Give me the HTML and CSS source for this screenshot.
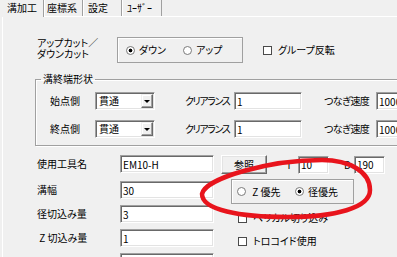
FILE: index.html
```html
<!DOCTYPE html>
<html lang="ja">
<head>
<meta charset="utf-8">
<title>溝加工</title>
<link rel="stylesheet" href="styles.css">
</head>
<body>

<div class="Tabs">
    <div class="Tab Active T1">溝加工</div>
    <div class="Tab T2">座標系</div>
    <div class="Tab T3">設定</div>
    <div class="Tab T4">ﾕｰｻﾞｰ</div>
</div>

<div class="Panel">

    <div class="CutRow">
        <div class="CutLabel">
            <div>アップカット／</div>
            <div>ダウンカット</div>
        </div>
        <div class="RadioBox CutBox">
            <span class="Radio CutFirst"><i class="Dot On"></i>ダウン</span>
            <span class="Radio"><i class="Dot"></i>アップ</span>
        </div>
        <span class="Check FlipCheck"><i class="Box"></i>グループ反転</span>
    </div>

    <fieldset class="Group">
        <legend>溝終端形状</legend>
        <div class="EndRow">
            <span class="EndLabel">始点側</span>
            <div class="Combo"><span class="ComboText">貫通</span><span class="ComboBtn"><i class="Arrow"></i></span></div>
            <span class="ClrLabel">クリアランス</span>
            <input class="Edit ClrEdit" value="1">
            <span class="SpdLabel">つなぎ速度</span>
            <input class="Edit SpdEdit" value="1000">
        </div>
        <div class="EndRow Second">
            <span class="EndLabel">終点側</span>
            <div class="Combo"><span class="ComboText">貫通</span><span class="ComboBtn"><i class="Arrow"></i></span></div>
            <span class="ClrLabel">クリアランス</span>
            <input class="Edit ClrEdit" value="1">
            <span class="SpdLabel">つなぎ速度</span>
            <input class="Edit SpdEdit" value="1000">
        </div>
    </fieldset>

    <div class="Lower">
        <div class="LeftCol">
            <div class="FieldRow"><span class="FieldLabel">使用工具名</span><input class="Edit LongEdit" value="EM10-H"></div>
            <div class="FieldRow"><span class="FieldLabel">溝幅</span><input class="Edit LongEdit" value="30"></div>
            <div class="FieldRow"><span class="FieldLabel">径切込み量</span><input class="Edit LongEdit" value="3"></div>
            <div class="FieldRow"><span class="FieldLabel">&nbsp;Z 切込み量</span><input class="Edit LongEdit" value="1"></div>
            <div class="FieldRow"><span class="FieldLabel">主軸回転数 S</span><input class="Edit LongEdit" value=""></div>
        </div>
        <div class="RightCol">
            <div class="ToolRow">
                <button class="Btn">参照</button>
                <span class="TLabel">T</span>
                <input class="Edit ShortEdit" value="10">
                <span class="DLabel">D</span>
                <input class="Edit ShortEdit" value="190">
            </div>
            <div class="RadioBox PrioBox">
                <span class="Radio PrioFirst"><i class="Dot"></i>&nbsp;Z 優先</span>
                <span class="Radio"><i class="Dot On"></i>径優先</span>
            </div>
            <span class="Check SideCheck HelixCheck"><i class="Box"></i>ヘリカル切り込み</span>
            <span class="Check SideCheck TrochoidCheck"><i class="Box"></i>トロコイド使用</span>
        </div>
    </div>

</div>

<!-- red mark drawn over the screenshot -->
<svg class="Mark" width="397" height="257" viewBox="0 0 397 257">
    <path d="M202 194 C205 178 270 160 322 160 C350 160 370 172 370 190 C370 208 335 217 287 217 C240 217 202 210 202 194 Z"
          fill="none" stroke="#e8141c" stroke-width="4.5"/>
</svg>

</body>
</html>
```

FILE: styles.css
```css
body {
    margin: 0;
    width: 397px;
    height: 257px;
    overflow: hidden;
    position: relative;
    background: #f0f0f0;
    color: #000;
    font-family: "Noto Sans CJK JP", sans-serif;
    font-size: 10px;
    line-height: 12px;
    font-feature-settings: "palt" 1;
}

/* tab strip */

.Tabs {
    display: flex;
    height: 16px;
    border-bottom: 1px solid #fff;
}

.Tab {
    box-sizing: border-box;
    height: 16px;
    line-height: 15px;
    border-left: 1px solid #fff;
    border-right: 1px solid #a0a0a0;
    white-space: nowrap;
}

.Active {
    height: 17px;
    margin-bottom: -1px;
    background: #f0f0f0;
}

.T1 {
    width: 44px;
    padding-left: 7px;
    border-left: none;
}

.T2 {
    width: 39px;
    padding-left: 2px;
}

.T3 {
    width: 39px;
    padding-left: 4px;
}

.T4 {
    width: 40px;
    padding-left: 4px;
}

/* panel */

.Panel {
    margin-left: 2px;
    border-left: 1px solid #fff;
    padding-top: 20px;
    height: 240px;
}

.CutRow {
    display: flex;
    align-items: flex-start;
    margin-left: 34px;
}

.CutLabel {
    width: 80px;
    line-height: 11px;
}

.RadioBox {
    box-sizing: border-box;
    display: flex;
    align-items: center;
    border: 1px solid #a0a0a0;
    box-shadow: inset 1px 1px #fff;
}

.CutBox {
    width: 126px;
    height: 26px;
    padding-left: 8px;
}

.Radio {
    display: flex;
    align-items: center;
    gap: 4px;
    white-space: nowrap;
}

.CutFirst {
    width: 57px;
}

.Dot {
    box-sizing: border-box;
    width: 9px;
    height: 9px;
    border: 1px solid #7a7a7a;
    border-radius: 50%;
    background: #fff;
}

.Dot.On {
    background: radial-gradient(circle, #000 0 1.6px, #fff 2.2px);
}

.Check {
    display: flex;
    align-items: center;
    gap: 6px;
    white-space: nowrap;
}

.Box {
    box-sizing: border-box;
    width: 9px;
    height: 9px;
    border: 1px solid #4a4a4a;
    background: #fff;
}

.FlipCheck {
    margin-left: 20px;
    align-self: center;
}

/* group box */

.Group {
    box-sizing: border-box;
    width: 400px;
    margin: 10px 0 0 32px;
    padding: 0 0 7px 5px;
    border: 1px solid #a0a0a0;
    box-shadow: inset 1px 1px #fff, 1px 1px #fff;
}

.Group legend {
    padding: 0 2px;
    line-height: 12px;
}

.EndRow {
    display: flex;
    align-items: center;
    height: 18px;
    margin: 7px 0 0 9px;
}

.EndRow.Second {
    margin-top: 10px;
}

.EndLabel {
    width: 45px;
}

.Combo {
    box-sizing: border-box;
    display: flex;
    align-items: stretch;
    width: 60px;
    height: 18px;
    padding: 1px;
    border: 1px solid;
    border-color: #a0a0a0 #fff #fff #a0a0a0;
    box-shadow: inset 1px 1px #696969, inset -1px -1px #e3e3e3;
    background: #fff;
}

.ComboText {
    padding-left: 2px;
    line-height: 14px;
}

.ComboBtn {
    box-sizing: border-box;
    display: flex;
    align-items: center;
    justify-content: center;
    width: 12px;
    margin-left: auto;
    border: 1px solid;
    border-color: #f0f0f0 #696969 #696969 #f0f0f0;
    box-shadow: inset -1px -1px #a0a0a0, inset 1px 1px #fff;
    background: #f0f0f0;
}

.Arrow {
    width: 0;
    height: 0;
    border-left: 3px solid transparent;
    border-right: 3px solid transparent;
    border-top: 3px solid #000;
}

.ClrLabel {
    width: 49px;
    margin-left: 30px;
    letter-spacing: -1.4px;
    white-space: nowrap;
}

.SpdLabel {
    width: 52px;
    margin-left: 22px;
    letter-spacing: -0.6px;
    white-space: nowrap;
}

/* edit boxes */

.Edit {
    box-sizing: border-box;
    height: 18px;
    margin: 0;
    padding: 0 0 0 2px;
    border: 1px solid;
    border-color: #a0a0a0 #fff #fff #a0a0a0;
    box-shadow: inset 1px 1px #696969, inset -1px -1px #e3e3e3;
    background: #fff;
    color: #000;
    font: inherit;
    outline: none;
}

.ClrEdit {
    width: 68px;
}

.SpdEdit {
    width: 60px;
    flex: none;
}

.LongEdit {
    width: 94px;
}

.ShortEdit {
    width: 31px;
}

/* lower part */

.Lower {
    display: flex;
    align-items: flex-start;
    margin: 9px 0 0 34px;
}

.LeftCol {
    display: flex;
    flex-direction: column;
}

.FieldRow {
    display: flex;
    align-items: center;
    height: 18px;
    margin-top: 6px;
}

.FieldRow:first-child {
    margin-top: 0;
    margin-bottom: 2px;
}

.FieldLabel {
    width: 83px;
    white-space: nowrap;
}

.RightCol {
    display: flex;
    flex-direction: column;
    align-items: flex-start;
    margin-left: 7px;
}

.ToolRow {
    display: flex;
    align-items: center;
    height: 19px;
}

.Btn {
    box-sizing: border-box;
    width: 46px;
    height: 19px;
    padding: 0;
    border: 1px solid;
    border-color: #fff #696969 #696969 #fff;
    box-shadow: inset -1px -1px #a0a0a0, inset 1px 1px #e3e3e3;
    background: #f0f0f0;
    color: #000;
    font: inherit;
}

.TLabel {
    width: 12px;
    margin-left: 19px;
}

.DLabel {
    width: 10px;
    margin-left: 15px;
}

.PrioBox {
    width: 123px;
    height: 25px;
    margin: 5px 0 0 10px;
    padding-left: 5px;
}

.PrioFirst {
    width: 58px;
}

.SideCheck {
    margin-left: 17px;
}

.HelixCheck {
    margin-top: 8px;
}

.TrochoidCheck {
    margin-top: 11px;
}

.Mark {
    position: absolute;
    left: 0;
    top: 0;
    pointer-events: none;
}
```
